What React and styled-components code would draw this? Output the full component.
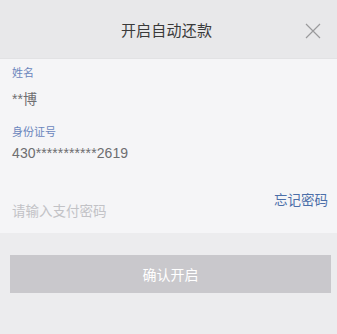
import React from "react";
import styled, { createGlobalStyle } from "styled-components";

const Global = createGlobalStyle`
  html, body { margin: 0; padding: 0; }
  body {
    background: #ececee;
    font-family: "Noto Sans CJK SC", "Liberation Sans", sans-serif;
  }
`;

const Page = styled.div`
  width: 337px;
  height: 334px;
  display: flex;
  flex-direction: column;
  background: #ececee;
  overflow: hidden;
`;

const Header = styled.div`
  height: 58px;
  background: #e8e8ea;
  display: flex;
  align-items: center;
  justify-content: center;
  position: relative;
  border-bottom: 1px solid #e2e2e4;
`;

const Title = styled.div`
  font-size: 15px;
  color: #3a3a3a;
  letter-spacing: 0.2px;
  margin-left: -4px;
`;

const Close = styled.div`
  position: absolute;
  right: 16px;
  top: 20px;
  width: 16px;
  height: 16px;
`;

const Body = styled.div`
  background: #f5f5f7;
  padding: 4px 12px 0 12px;
  height: 174px;
  box-sizing: border-box;
  display: flex;
  flex-direction: column;
`;

const Label = styled.div`
  font-size: 11px;
  color: #6b86bd;
  line-height: 16px;
  margin-top: ${(p) => p.$mt || 0}px;
`;

const Value = styled.div`
  font-size: 14px;
  color: #6e6e70;
  line-height: 20px;
  margin-top: ${(p) => p.$mt || 0}px;
  font-family: "Liberation Sans", "Noto Sans CJK SC", sans-serif;
  letter-spacing: 0.1px;
`;

const PwdRow = styled.div`
  display: flex;
  justify-content: space-between;
  margin-top: 26px;
`;

const Placeholder = styled.div`
  font-size: 13.5px;
  color: #c2c2c6;
  margin-top: 11px;
  line-height: 20px;
`;

const Forgot = styled.div`
  font-size: 13.5px;
  color: #4c6fa9;
  line-height: 20px;
  margin-right: -3px;
`;

const Button = styled.div`
  margin: 22px 6px 0 10px;
  height: 38px;
  background: #c9c8cc;
  color: #fff;
  font-size: 14px;
  display: flex;
  align-items: center;
  justify-content: center;
`;

export default function App() {
  return (
    <Page>
      <Global />
      <Header>
        <Title>开启自动还款</Title>
        <Close>
          <svg width="16" height="16" viewBox="0 0 16 16">
            <path d="M1 1 L15 15 M15 1 L1 15" stroke="#9a9a9c" strokeWidth="1.2" fill="none" />
          </svg>
        </Close>
      </Header>
      <Body>
        <Label $mt={1}>姓名</Label>
        <Value $mt={9}>**博</Value>
        <Label $mt={14}>身份证号</Label>
        <Value $mt={4}>430***********2619</Value>
        <PwdRow>
          <Placeholder>请输入支付密码</Placeholder>
          <Forgot>忘记密码</Forgot>
        </PwdRow>
      </Body>
      <Button>确认开启</Button>
    </Page>
  );
}
